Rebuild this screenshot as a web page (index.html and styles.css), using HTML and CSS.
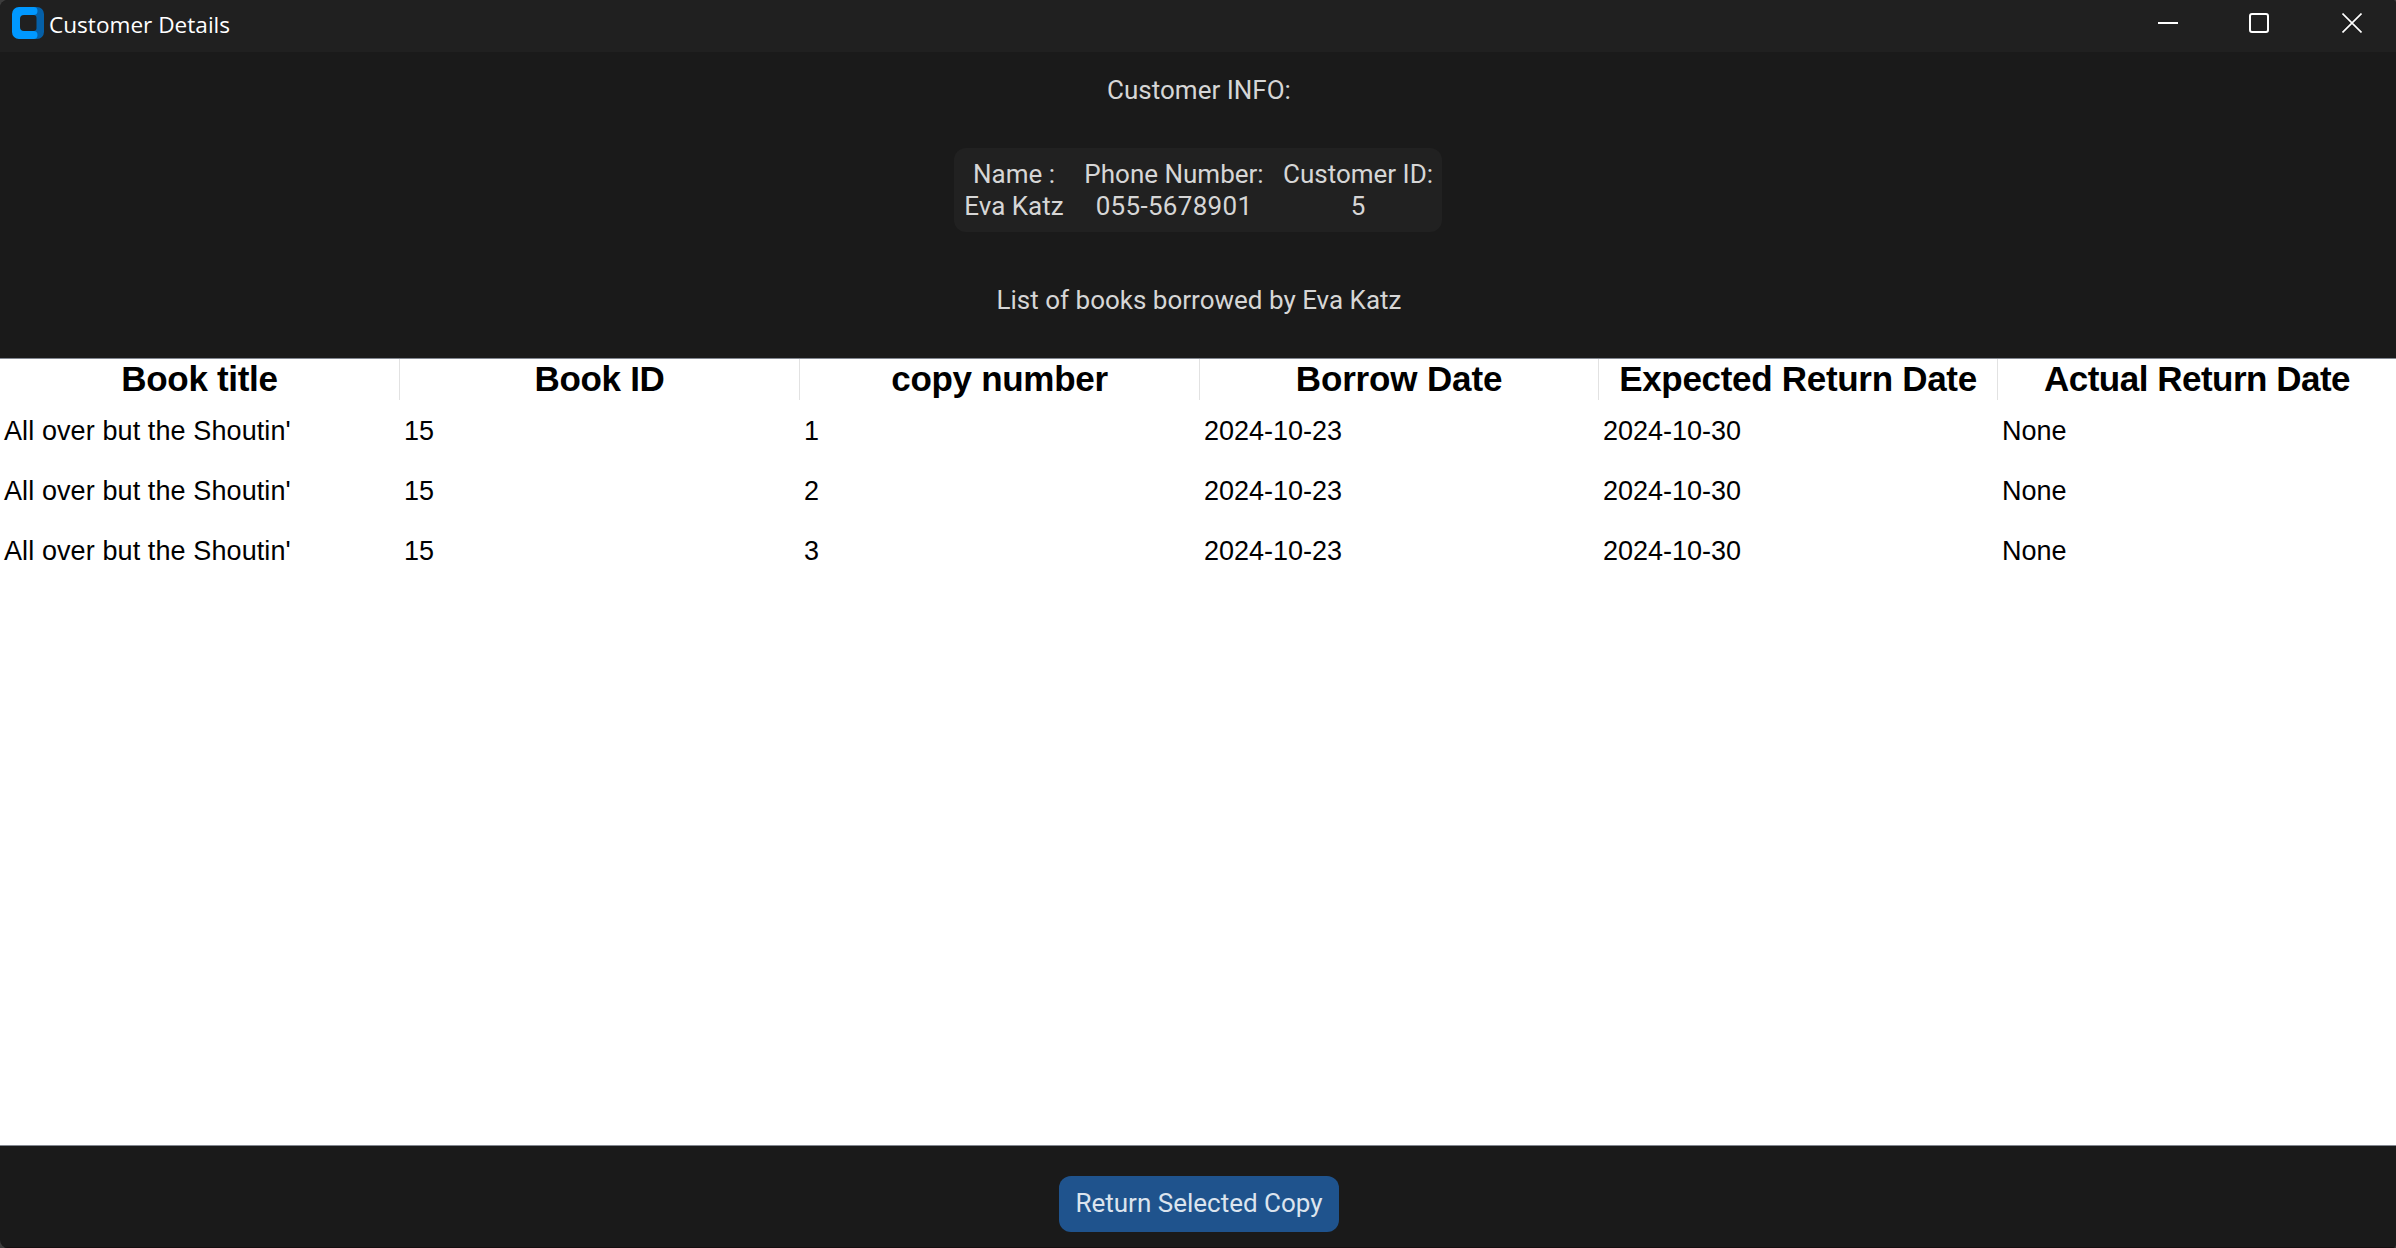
FILE: index.html
```html
<!DOCTYPE html>
<html lang="en">
<head>
<meta charset="utf-8">
<title>Customer Details</title>
<link rel="stylesheet" href="styles.css">
</head>
<body>
<div class="window">
  <header class="titlebar">
    <svg class="app-icon" width="32" height="32" viewBox="0 0 32 32">
      <path fill="#0560a8" d="M20 0h5a7 7 0 0 1 7 7v18a7 7 0 0 1-7 7h-5v-8h1.500a3 3 0 0 0 3-3V11a3 3 0 0 0-3-3H20z"/>
      <path fill="#0098ff" d="M7 0h14.500a4 4 0 0 1 0 8H12a4 4 0 0 0-4 4v8a4 4 0 0 0 4 4h9.500a4 4 0 0 1 0 8H7a7 7 0 0 1-7-7V7a7 7 0 0 1 7-7z"/>
    </svg>
    <h1 class="title">Customer Details</h1>
    <div class="controls">
      <svg width="20" height="20" viewBox="0 0 20 20"><path d="M0 10h20" stroke="#fff" stroke-width="2"/></svg>
      <svg class="maximize" width="20" height="20" viewBox="0 0 20 20"><rect x="1" y="1" width="18" height="18" rx="2" fill="none" stroke="#fff" stroke-width="2"/></svg>
      <svg width="20" height="20" viewBox="0 0 20 20"><path d="M.5.500l19 19M19.500.500l-19 19" stroke="#fff" stroke-width="1.600"/></svg>
    </div>
  </header>
  <section class="info">
    <p class="label heading">Customer INFO:</p>
    <dl class="card">
      <div class="field name"><dt>Name :</dt><dd>Eva Katz</dd></div>
      <div class="field phone"><dt>Phone Number:</dt><dd class="number">055-5678901</dd></div>
      <div class="field id"><dt>Customer ID:</dt><dd>5</dd></div>
    </dl>
    <p class="label list-title">List of books borrowed by Eva Katz</p>
  </section>
  <main class="table">
    <div class="row head"><span>Book title</span><span>Book ID</span><span>copy number</span><span class="borrow">Borrow Date</span><span>Expected Return Date</span><span class="actual">Actual Return Date</span></div>
    <div class="row"><span class="book">All over but the Shoutin'</span><span>15</span><span>1</span><span>2024-10-23</span><span>2024-10-30</span><span>None</span></div>
    <div class="row"><span class="book">All over but the Shoutin'</span><span>15</span><span>2</span><span>2024-10-23</span><span>2024-10-30</span><span>None</span></div>
    <div class="row"><span class="book">All over but the Shoutin'</span><span>15</span><span>3</span><span>2024-10-23</span><span>2024-10-30</span><span>None</span></div>
  </main>
  <footer class="footer"><button class="return-button">Return Selected Copy</button></footer>
</div>
</body>
</html>
```
FILE: styles.css
```css
* { box-sizing: border-box; margin: 0; padding: 0; }

body { background: #3c3c3c; }

.window {
  display: flex;
  flex-direction: column;
  width: 2396px;
  height: 1248px;
  overflow: hidden;
  border-radius: 8px 4px 4px 8px;
  background: #1a1a1a;
  color: #d6d6d6;
  font: 26px/32px Roboto, sans-serif;
}

.titlebar {
  display: flex;
  align-items: flex-start;
  height: 52px;
  padding: 7px 34px 0 12px;
  background: #202020;
}

.title {
  margin-left: 5px;
  color: #fff;
  font: 400 22.6px/35px "Open Sans", sans-serif;
  white-space: nowrap;
}

.controls {
  display: flex;
  margin: 6px 0 0 auto;
}

.maximize { margin: 0 73px 0 71px; }

.info {
  display: flex;
  flex-direction: column;
  align-items: center;
  height: 306px;
  padding-top: 22px;
}

.label {
  padding-left: 2px;
  white-space: nowrap;
}

.card {
  display: flex;
  width: 488px;
  height: 84px;
  margin: 42px 0 52px;
  padding: 10px 0;
  border-radius: 12px;
  background: #212121;
  text-align: center;
  white-space: nowrap;
}

.name { width: 120px; }
.phone { width: 200px; }
.id { width: 168px; }
.number { letter-spacing: .3px; }

.table {
  height: 788px;
  border-top: 1px solid #828790;
  border-bottom: 1px solid #828790;
  background: #fff;
  color: #000;
  font: 27px/62px "Liberation Sans", Arial, sans-serif;
}

.row {
  display: grid;
  grid-template-columns: 400px 400px 400px 399px 399px 398px;
  height: 60px;
  white-space: nowrap;
}

.row span { padding-left: 4px; }
.row .book { letter-spacing: .1px; }

.head {
  height: 41px;
  font-size: 35px;
  font-weight: 700;
  line-height: 40px;
  letter-spacing: -.3px;
  text-align: center;
}

.head span { padding: 0; border-right: 1px solid #e2e2e2; }
.head .borrow { letter-spacing: -.15px; }
.head .actual { border-right: 0; letter-spacing: -.5px; }

.footer {
  display: flex;
  flex: 1;
  justify-content: center;
  align-items: flex-start;
  padding: 30px 0 0 2px;
  border-bottom: 1px solid #150f10;
}

.return-button {
  width: 280px;
  height: 56px;
  padding-bottom: 2px;
  border: 0;
  border-radius: 12px;
  background: #1f538d;
  color: #dce4ee;
  font: 26px/54px Roboto, sans-serif;
  white-space: nowrap;
}
```
